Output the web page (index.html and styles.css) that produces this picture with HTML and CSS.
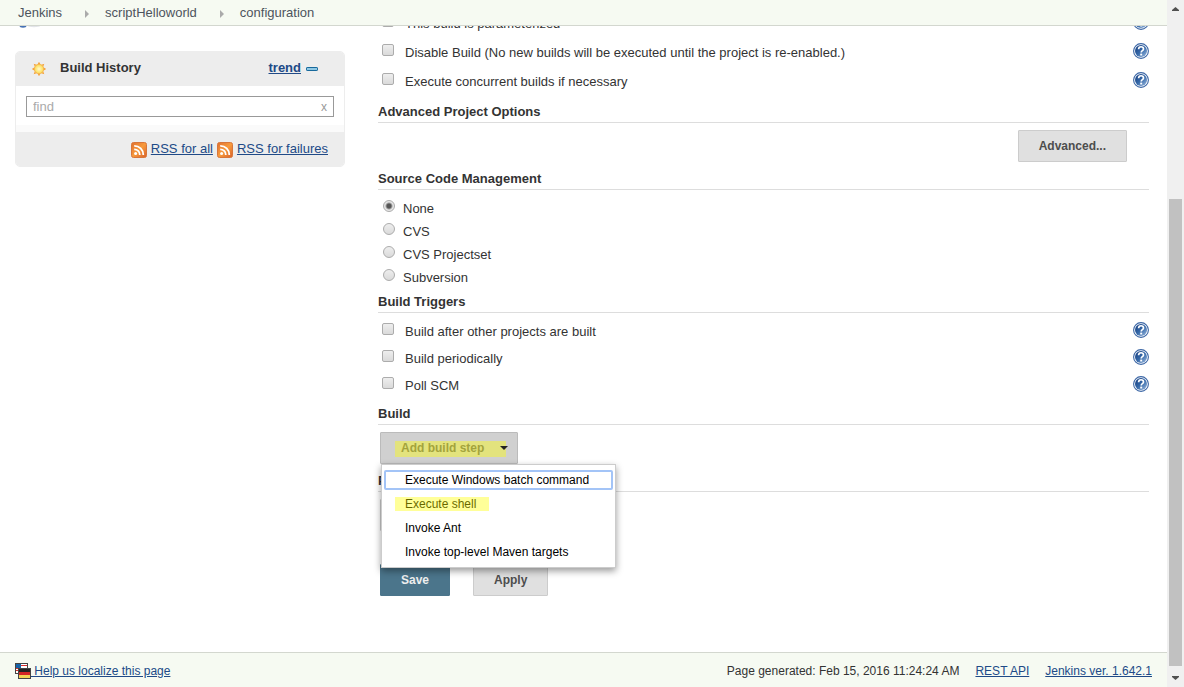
FILE: index.html
```html
<!DOCTYPE html>
<html lang="en">
<head>
<meta charset="utf-8">
<title>scriptHelloworld Config [Jenkins]</title>
<link rel="stylesheet" href="styles.css">
</head>
<body>
<svg class="defs" aria-hidden="true">
  <defs>
    <linearGradient id="blue" x1="0" y1="0" x2="1" y2="1"><stop offset="0" stop-color="#143a7c"/><stop offset=".5" stop-color="#3568a8"/><stop offset="1" stop-color="#9dbbe0"/></linearGradient>
    <linearGradient id="orange" x1="0" y1="0" x2="1" y2="1"><stop offset="0" stop-color="#e0702f"/><stop offset=".5" stop-color="#f79a3c"/><stop offset="1" stop-color="#d9622a"/></linearGradient>
    <radialGradient id="sun"><stop offset="0" stop-color="#fffbd0"/><stop offset="1" stop-color="#fcd94a"/></radialGradient>
    <symbol id="help" viewBox="0 0 16 16">
      <circle cx="8" cy="8" r="7.4" fill="#fff" stroke="#3b66a5" stroke-width="1.1"/>
      <circle cx="8" cy="8" r="6" fill="url(#blue)"/>
      <path d="M5.6 6.2C5.6 3 10.5 3 10.5 5.9C10.5 7.6 8.2 7.6 8.2 9.4" fill="none" stroke="#fff" stroke-width="1.7"/>
      <rect x="7.2" y="10.6" width="2" height="1.9" fill="#fff"/>
    </symbol>
    <symbol id="rss" viewBox="0 0 16 16">
      <rect x=".5" y=".5" width="15" height="15" rx="2" fill="url(#orange)" stroke="#d8763a"/>
      <circle cx="4.6" cy="11.6" r="1.5" fill="#fff"/>
      <path d="M3.2 7.3A5.5 5.5 0 0 1 8.8 13M3.2 3.8A9 9 0 0 1 12.3 13" fill="none" stroke="#fff" stroke-width="1.8"/>
    </symbol>
  </defs>
</svg>
<div class="window">
  <div class="page">
    <nav class="breadcrumbs">
      <a href="#">Jenkins</a><span class="crumb-arrow"></span><a href="#">scriptHelloworld</a><span class="crumb-arrow"></span><a href="#">configuration</a>
    </nav>
    <div class="content">
      <aside class="sidebar">
        <svg class="task-icon" width="24" height="3" viewBox="0 0 24 3" aria-hidden="true"><ellipse cx="5" cy="0" rx="3.4" ry="1.7" fill="#4672b5"/><ellipse cx="16" cy="0" rx="6" ry="1.2" fill="#e2e4e8"/></svg>
        <section class="history">
          <header class="history-head">
            <svg width="16" height="16" viewBox="0 0 16 16" aria-hidden="true"><path d="M8 .8L9.4 3.3H6.6ZM8 15.2L6.6 12.7H9.4ZM.8 8L3.3 6.6V9.4ZM15.2 8L12.7 9.4V6.6ZM2.7 2.7L5.6 3.7L3.7 5.6ZM13.3 2.7L12.3 5.6L10.4 3.7ZM2.7 13.3L3.7 10.4L5.6 12.3ZM13.3 13.3L10.4 12.3L12.3 10.4Z" fill="#f5a238"/><circle cx="8" cy="8" r="4.7" fill="url(#sun)" stroke="#f3b04a" stroke-width=".9"/></svg>
            <h2>Build History</h2>
            <a href="#">trend</a>
            <svg width="12" height="4" viewBox="0 0 12 4" aria-hidden="true"><rect x=".5" y=".5" width="11" height="3" rx=".6" fill="#8fc8e4" stroke="#17699c"/></svg>
          </header>
          <div class="history-search">
            <div class="find"><input type="text" placeholder="find" aria-label="find"><button type="button">x</button></div>
          </div>
          <footer class="history-feeds">
            <svg width="16" height="16" aria-hidden="true"><use href="#rss"/></svg><a href="#">RSS for all</a>
            <svg width="16" height="16" aria-hidden="true"><use href="#rss"/></svg><a href="#">RSS for failures</a>
          </footer>
        </section>
      </aside>
      <form class="config">
        <div class="general">
          <div class="option tall"><label><input type="checkbox">This build is parameterized</label><a href="#" aria-label="Help"><svg width="16" height="16"><use href="#help"/></svg></a></div>
          <div class="option tall"><label><input type="checkbox">Disable Build (No new builds will be executed until the project is re-enabled.)</label><a href="#" aria-label="Help"><svg width="16" height="16"><use href="#help"/></svg></a></div>
          <div class="option tall"><label><input type="checkbox">Execute concurrent builds if necessary</label><a href="#" aria-label="Help"><svg width="16" height="16"><use href="#help"/></svg></a></div>
        </div>
        <h3>Advanced Project Options</h3>
        <div class="section advanced"><button type="button" class="btn">Advanced...</button></div>
        <h3>Source Code Management</h3>
        <div class="section radios">
          <label><input type="radio" name="scm" checked>None</label>
          <label><input type="radio" name="scm">CVS</label>
          <label><input type="radio" name="scm">CVS Projectset</label>
          <label><input type="radio" name="scm">Subversion</label>
        </div>
        <h3>Build Triggers</h3>
        <div class="triggers">
          <div class="option"><label><input type="checkbox">Build after other projects are built</label><a href="#" aria-label="Help"><svg width="16" height="16"><use href="#help"/></svg></a></div>
          <div class="option"><label><input type="checkbox">Build periodically</label><a href="#" aria-label="Help"><svg width="16" height="16"><use href="#help"/></svg></a></div>
          <div class="option"><label><input type="checkbox">Poll SCM</label><a href="#" aria-label="Help"><svg width="16" height="16"><use href="#help"/></svg></a></div>
        </div>
        <h3>Build</h3>
        <div class="section steps">
          <div class="dropdown">
            <button type="button" class="btn open">Add build step<span class="caret"></span></button>
            <div class="menu">
              <button type="button" class="focused">Execute Windows batch command</button>
              <button type="button"><span class="mark">Execute shell</span></button>
              <button type="button">Invoke Ant</button>
              <button type="button">Invoke top-level Maven targets</button>
            </div>
          </div>
        </div>
        <h3>Post-build Actions</h3>
        <div class="section steps"><button type="button" class="btn">Add post-build action<span class="caret"></span></button></div>
        <div class="actions">
          <button type="button" class="btn primary">Save</button>
          <button type="button" class="btn">Apply</button>
        </div>
      </form>
    </div>
    <footer class="page-foot">
      <a href="#" class="localize"><svg width="16" height="16" viewBox="0 0 16 16" aria-hidden="true"><rect x=".5" y=".5" width="12" height="10" fill="#fff" stroke="#444"/><path d="M1 5.5H12M1 7.5H12M6 2.5H12" stroke="#d82c2c"/><rect x="1" y="1" width="5" height="4" fill="#1663a8"/><rect x="3.5" y="5.5" width="12" height="10" fill="#222" stroke="#444"/><rect x="4" y="9" width="11" height="3" fill="#d12525"/><rect x="4" y="12" width="11" height="3" fill="#f1d354"/></svg>&nbsp;Help us localize this page</a>
      <span class="generated">Page generated: Feb 15, 2016 11:24:24 AM</span>
      <a href="#">REST API</a>
      <a href="#">Jenkins ver. 1.642.1</a>
    </footer>
  </div>
  <div class="scrollbar" aria-hidden="true">
    <svg width="17" height="17" viewBox="0 0 17 17"><path d="M5 11H12V10L8.5 7L5 10Z" fill="#505050"/></svg>
    <div class="track"><div class="thumb"></div></div>
    <svg width="17" height="17" viewBox="0 0 17 17"><path d="M5 6H12V7L8.5 10L5 7Z" fill="#505050"/></svg>
  </div>
</div>
</body>
</html>
```

FILE: styles.css
```css
* { box-sizing: border-box; }
body { margin: 0; background: #fff; color: #333; font: 13px/18px "Liberation Sans", Arial, sans-serif; }
button, input { font: inherit; margin: 0; }
h2, h3 { margin: 0; font-size: 13px; font-weight: bold; }
a { color: #204a87; }
svg { display: block; flex: none; }
.defs { position: absolute; width: 0; height: 0; }

.window { display: flex; height: 100vh; overflow: hidden; }
.page { flex: 1; min-width: 0; display: flex; flex-direction: column; }

.breadcrumbs { flex: none; display: flex; align-items: center; height: 26px; padding: 0 18px; background: #f6faf2; border-bottom: 1px solid #d3d7cf; }
.breadcrumbs a { color: #4d545d; text-decoration: none; }
.crumb-arrow { margin: 2px 16px 0 23px; border: 4px solid transparent; border-left-color: #aaa; border-right: 0; }

.content { flex: 1; min-height: 0; display: flex; overflow: hidden; }
.sidebar { flex: none; width: 345px; padding-left: 15px; }
.task-icon { margin: 0 0 22px 3px; }
.history { border: 1px solid #ededed; border-radius: 5px; overflow: hidden; background: #fff; }
.history-head { display: flex; align-items: center; height: 34px; padding: 0 26px 2px 15px; background: #ededed; }
.history-head h2 { flex: 1; margin-left: 13px; }
.history-head a { margin-right: 5px; font-weight: bold; }
.history-head svg { margin-top: 2px; }
.history-search { padding: 10px 10px 8px; border-bottom: 7px solid #fafafa; }
.find { display: flex; height: 21px; border: 1px solid #999; }
.find input { flex: 1; min-width: 0; padding: 0 6px; border: 0; background: none; outline: 0; }
.find input::placeholder { color: #aaa; opacity: 1; }
.find button { padding: 0 6px; border: 0; background: none; color: #999; font-size: 12px; }
.history-feeds { display: flex; align-items: center; justify-content: flex-end; gap: 4px; height: 34px; padding-right: 16px; background: #ededed; }
.history-feeds svg { margin-top: 2px; }

.config { flex: 1; min-width: 0; margin: 0 18px 0 33px; }
.general { margin-top: -17px; padding-bottom: 3px; }
.option { display: flex; align-items: center; justify-content: space-between; height: 27px; }
.option.tall { height: 29px; }
.option > a { margin-bottom: 4px; }
.option label { display: flex; align-items: center; gap: 11px; padding-left: 4px; }
input[type="checkbox"], input[type="radio"] { appearance: none; flex: none; width: 12px; height: 12px; margin-bottom: 6px; border: 1px solid #acacac; border-radius: 2px; background: linear-gradient(#eee, #dadada); }
input[type="radio"] { border-radius: 50%; }
input[type="radio"]:checked { background: radial-gradient(circle, #555 0 2px, #e6e6e6 4px); }
.config h3 { height: 24px; padding-top: 4px; border-bottom: 1px solid #ddd; }
.section { padding: 7px 0 4px; }
.advanced { display: flex; justify-content: flex-end; padding-right: 22px; }
.radios { padding-bottom: 0; }
.radios label { display: flex; align-items: center; gap: 8px; height: 23px; padding-left: 5px; }
.triggers { padding: 5px 0 2px; }
.steps { padding-left: 2px; }

.btn { display: inline-flex; align-items: center; height: 32px; padding: 0 20px; border: 1px solid #ccc; border-radius: 1px; background: #e0e0e0; color: #4d4d4d; font-size: 12px; font-weight: bold; }
.btn.primary { border-color: #4b758b; background: #4b758b; color: #eee; }
.caret { margin-left: 16px; border: 4px solid transparent; border-top-color: #222; border-bottom: 0; }
.dropdown { position: relative; display: flex; }
.btn.open { position: relative; padding-right: 9px; border-color: #bbb; background: #d0d0d0; color: #666; }
.btn.open .caret { position: relative; z-index: 1; }
.btn.open::after { content: ""; position: absolute; inset: 8px 11px 6px 14px; background: #ffff00; opacity: .4; }
.menu { position: absolute; top: 100%; left: 1px; z-index: 2; display: flex; flex-direction: column; gap: 4px; width: 235px; padding: 5px 2px; border: 1px solid #ccc; background: #fff; box-shadow: 0 3px 7px rgba(0, 0, 0, .4); }
.menu button { height: 20px; padding: 0 19px; border: 2px solid transparent; border-radius: 2px; background: none; color: #000; font-size: 12px; line-height: 16px; text-align: left; }
.menu .focused { border-color: #a3c4f7; }
.mark { position: relative; }
.mark::after { content: ""; position: absolute; inset: 0 -13px 0 -10px; background: #ffff00; opacity: .4; }
.actions { display: flex; gap: 23px; padding: 29px 0 0 2px; }

.page-foot { flex: none; display: flex; align-items: center; gap: 16px; height: 35px; padding: 1px 15px 0; background: #f6faf2; border-top: 1px solid #d3d7cf; font-size: 12px; }
.localize { display: flex; align-items: center; }
.generated { margin-left: auto; }

.scrollbar { flex: none; width: 17px; display: flex; flex-direction: column; background: #f0f0f0; }
.track { flex: 1; display: flex; flex-direction: column; justify-content: flex-end; padding: 0 2px 4px; }
.thumb { height: 72%; background: #c1c1c1; }
```
